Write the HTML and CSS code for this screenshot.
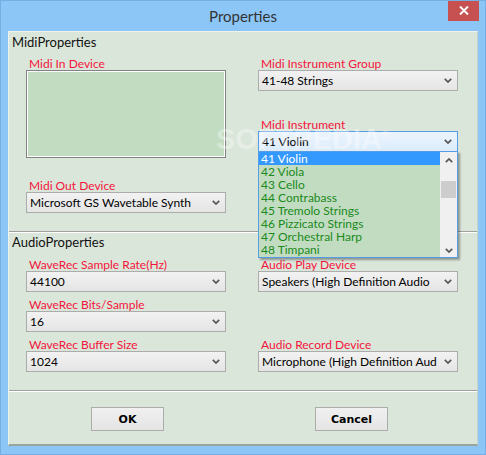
FILE: index.html
```html
<!DOCTYPE html>
<html lang="en">
<head>
    <meta charset="UTF-8">
    <title>Properties</title>
    <link rel="stylesheet" href="styles.css">
</head>
<body>
    <div class="window">
        <div class="titlebar">
            <span class="title">Properties</span>
            <div class="close-btn">
                <svg width="10" height="9" viewBox="0 0 10 9"><path d="M1 0.5 L9 8.5 M9 0.5 L1 8.5" stroke="#fff" stroke-width="2"/></svg>
            </div>
        </div>
        <div class="client">
            <div class="group">
                <div class="group-title">MidiProperties</div>
                <div class="cols">
                    <div class="col">
                        <label>Midi In Device</label>
                        <div class="listbox"></div>
                        <label class="out-label">Midi Out Device</label>
                        <div class="select"><span>Microsoft GS Wavetable Synth</span><svg class="arrow" width="8" height="5" viewBox="0 0 8 5"><path d="M0.8 0.8 L4 4 L7.2 0.8" fill="none" stroke="#555" stroke-width="1.7"/></svg></div>
                    </div>
                    <div class="col">
                        <label>Midi Instrument Group</label>
                        <div class="select"><span>41-48 Strings</span><svg class="arrow" width="8" height="5" viewBox="0 0 8 5"><path d="M0.8 0.8 L4 4 L7.2 0.8" fill="none" stroke="#555" stroke-width="1.7"/></svg></div>
                        <label class="inst-label">Midi Instrument</label>
                        <div class="select focused"><span>41 Violin</span><svg class="arrow" width="8" height="5" viewBox="0 0 8 5"><path d="M0.8 0.8 L4 4 L7.2 0.8" fill="none" stroke="#555" stroke-width="1.7"/></svg></div>
                    </div>
                </div>
            </div>
            <div class="group audio">
                <div class="group-title">AudioProperties</div>
                <div class="grid">
                    <div class="field">
                        <label>WaveRec Sample Rate(Hz)</label>
                        <div class="select"><span>44100</span><svg class="arrow" width="8" height="5" viewBox="0 0 8 5"><path d="M0.8 0.8 L4 4 L7.2 0.8" fill="none" stroke="#555" stroke-width="1.7"/></svg></div>
                    </div>
                    <div class="field">
                        <label>Audio Play Device</label>
                        <div class="select"><span>Speakers (High Definition Audio</span><svg class="arrow" width="8" height="5" viewBox="0 0 8 5"><path d="M0.8 0.8 L4 4 L7.2 0.8" fill="none" stroke="#555" stroke-width="1.7"/></svg></div>
                    </div>
                    <div class="field">
                        <label>WaveRec Bits/Sample</label>
                        <div class="select"><span>16</span><svg class="arrow" width="8" height="5" viewBox="0 0 8 5"><path d="M0.8 0.8 L4 4 L7.2 0.8" fill="none" stroke="#555" stroke-width="1.7"/></svg></div>
                    </div>
                    <div></div>
                    <div class="field">
                        <label>WaveRec Buffer Size</label>
                        <div class="select"><span>1024</span><svg class="arrow" width="8" height="5" viewBox="0 0 8 5"><path d="M0.8 0.8 L4 4 L7.2 0.8" fill="none" stroke="#555" stroke-width="1.7"/></svg></div>
                    </div>
                    <div class="field">
                        <label>Audio Record Device</label>
                        <div class="select"><span>Microphone (High Definition Aud</span><svg class="arrow" width="8" height="5" viewBox="0 0 8 5"><path d="M0.8 0.8 L4 4 L7.2 0.8" fill="none" stroke="#555" stroke-width="1.7"/></svg></div>
                    </div>
                </div>
            </div>
            <div class="buttons">
                <button class="btn">OK</button>
                <button class="btn">Cancel</button>
            </div>
        </div>

        <!-- open dropdown of Midi Instrument -->
        <div class="dropdown">
            <ul class="items">
                <li class="selected">41 Violin</li>
                <li>42 Viola</li>
                <li>43 Cello</li>
                <li>44 Contrabass</li>
                <li>45 Tremolo Strings</li>
                <li>46 Pizzicato Strings</li>
                <li>47 Orchestral Harp</li>
                <li>48 Timpani</li>
            </ul>
            <div class="scrollbar">
                <svg width="8" height="5" viewBox="0 0 8 5"><path d="M0.8 4.2 L4 1 L7.2 4.2" fill="none" stroke="#555" stroke-width="1.7"/></svg>
                <div class="thumb"></div>
                <svg width="8" height="5" viewBox="0 0 8 5"><path d="M0.8 0.8 L4 4 L7.2 0.8" fill="none" stroke="#555" stroke-width="1.7"/></svg>
            </div>
        </div>

        <div class="watermark">SOFTPEDIA<sup>®</sup></div>
    </div>
</body>
</html>
```

FILE: styles.css
```css
body {
    margin: 0;
    padding: 0;
    font-family: Lato, 'Noto Sans', sans-serif;
    font-size: 12px;
}
.window {
    position: relative;
    width: 486px;
    height: 455px;
    box-sizing: border-box;
    background: #8cc6f7;
    border: 1px solid #74aee4;
    padding: 0 7px;
    overflow: hidden;
}
.titlebar {
    height: 30px;
    display: flex;
    justify-content: center;
    align-items: center;
}
.title {
    font-size: 15px;
    color: #333;
    margin-top: -1px;
}
.close-btn {
    position: absolute;
    top: -1px;
    right: 6px;
    width: 31px;
    height: 21px;
    background: #c75050;
    display: flex;
    justify-content: center;
    align-items: center;
}
.client {
    height: 415px;
    box-sizing: border-box;
    background: #dae6da;
    border-top: 1px solid #eef3ee;
    border-left: 1px solid #eef3ee;
    border-right: 1px solid #c9d4c9;
    border-bottom: 2px solid #9aa39a;
    display: flex;
    flex-direction: column;
}
.group-title {
    font-size: 13px;
    color: #111;
    height: 16px;
    line-height: 16px;
    padding: 2px 0 0 3px;
}
.cols {
    display: flex;
    gap: 32px;
    padding: 7px 0 0 17px;
}
.col {
    width: 200px;
    display: flex;
    flex-direction: column;
}
label {
    display: block;
    color: #f5143c;
    height: 13px;
    line-height: 13px;
    padding-left: 3px;
}
.listbox {
    height: 88px;
    box-sizing: border-box;
    background: #c2dcc2;
    border: 1px solid #828282;
    box-shadow: inset 1px 1px 0 #fff, inset -1px -1px 0 #fff;
}
.out-label {
    margin-top: 21px;
}
.inst-label {
    margin-top: 27px;
}
.select {
    height: 21px;
    box-sizing: border-box;
    border: 1px solid #acacac;
    background: linear-gradient(#f2f2f2, #e5e5e5);
    display: flex;
    align-items: center;
    justify-content: space-between;
    padding: 0 5px 0 3px;
    color: #000;
    white-space: nowrap;
    overflow: hidden;
}
.select.focused {
    border-color: #569de5;
    background: linear-gradient(#ecf4fc, #dcecfc);
}
.arrow {
    flex: none;
}
.audio {
    margin-top: 18px;
    border-top: 1px solid #a0a0a0;
    box-shadow: inset 0 1px 0 #fff;
}
.audio .group-title {
    padding-top: 2px;
}
.grid {
    display: grid;
    grid-template-columns: 200px 200px;
    column-gap: 32px;
    row-gap: 6px;
    padding: 8px 0 0 17px;
}
.buttons {
    margin-top: 18px;
    border-top: 1px solid #a0a0a0;
    box-shadow: inset 0 1px 0 #fff;
    display: flex;
    padding: 16px 0 0 82px;
    gap: 151px;
}
.btn {
    width: 73px;
    height: 24px;
    border: 1px solid #acacac;
    background: linear-gradient(#f0f0f0, #e5e5e5);
    font-family: 'DejaVu Sans', sans-serif;
    font-weight: bold;
    font-size: 11px;
    color: #000;
    padding: 0;
}
.dropdown {
    position: absolute;
    left: 257px;
    top: 150px;
    width: 200px;
    height: 107px;
    box-sizing: border-box;
    border: 1px solid #569de5;
    background: #c2dcc2;
    display: flex;
    box-shadow: 2px 2px 2px rgba(0, 0, 0, 0.35);
}
.items {
    list-style: none;
    margin: 0;
    padding: 0;
    flex: 1;
}
.items li {
    height: 13px;
    line-height: 13px;
    padding-left: 2px;
    color: #1a8a1a;
}
.items li.selected {
    background: #3399ff;
    color: #fff;
}
.scrollbar {
    width: 17px;
    background: #f0f0f0;
    display: flex;
    flex-direction: column;
    align-items: center;
    padding: 6px 0 4px;
    box-sizing: border-box;
}
.thumb {
    width: 15px;
    height: 17px;
    background: #cdcdcd;
    margin: 18px 0 auto;
}
.watermark {
    position: absolute;
    left: 215px;
    top: 122px;
    font-family: 'Liberation Sans', sans-serif;
    font-weight: bold;
    font-size: 29px;
    color: rgba(255, 255, 255, 0.35);
    pointer-events: none;
}
.watermark sup {
    font-size: 10px;
}
```
